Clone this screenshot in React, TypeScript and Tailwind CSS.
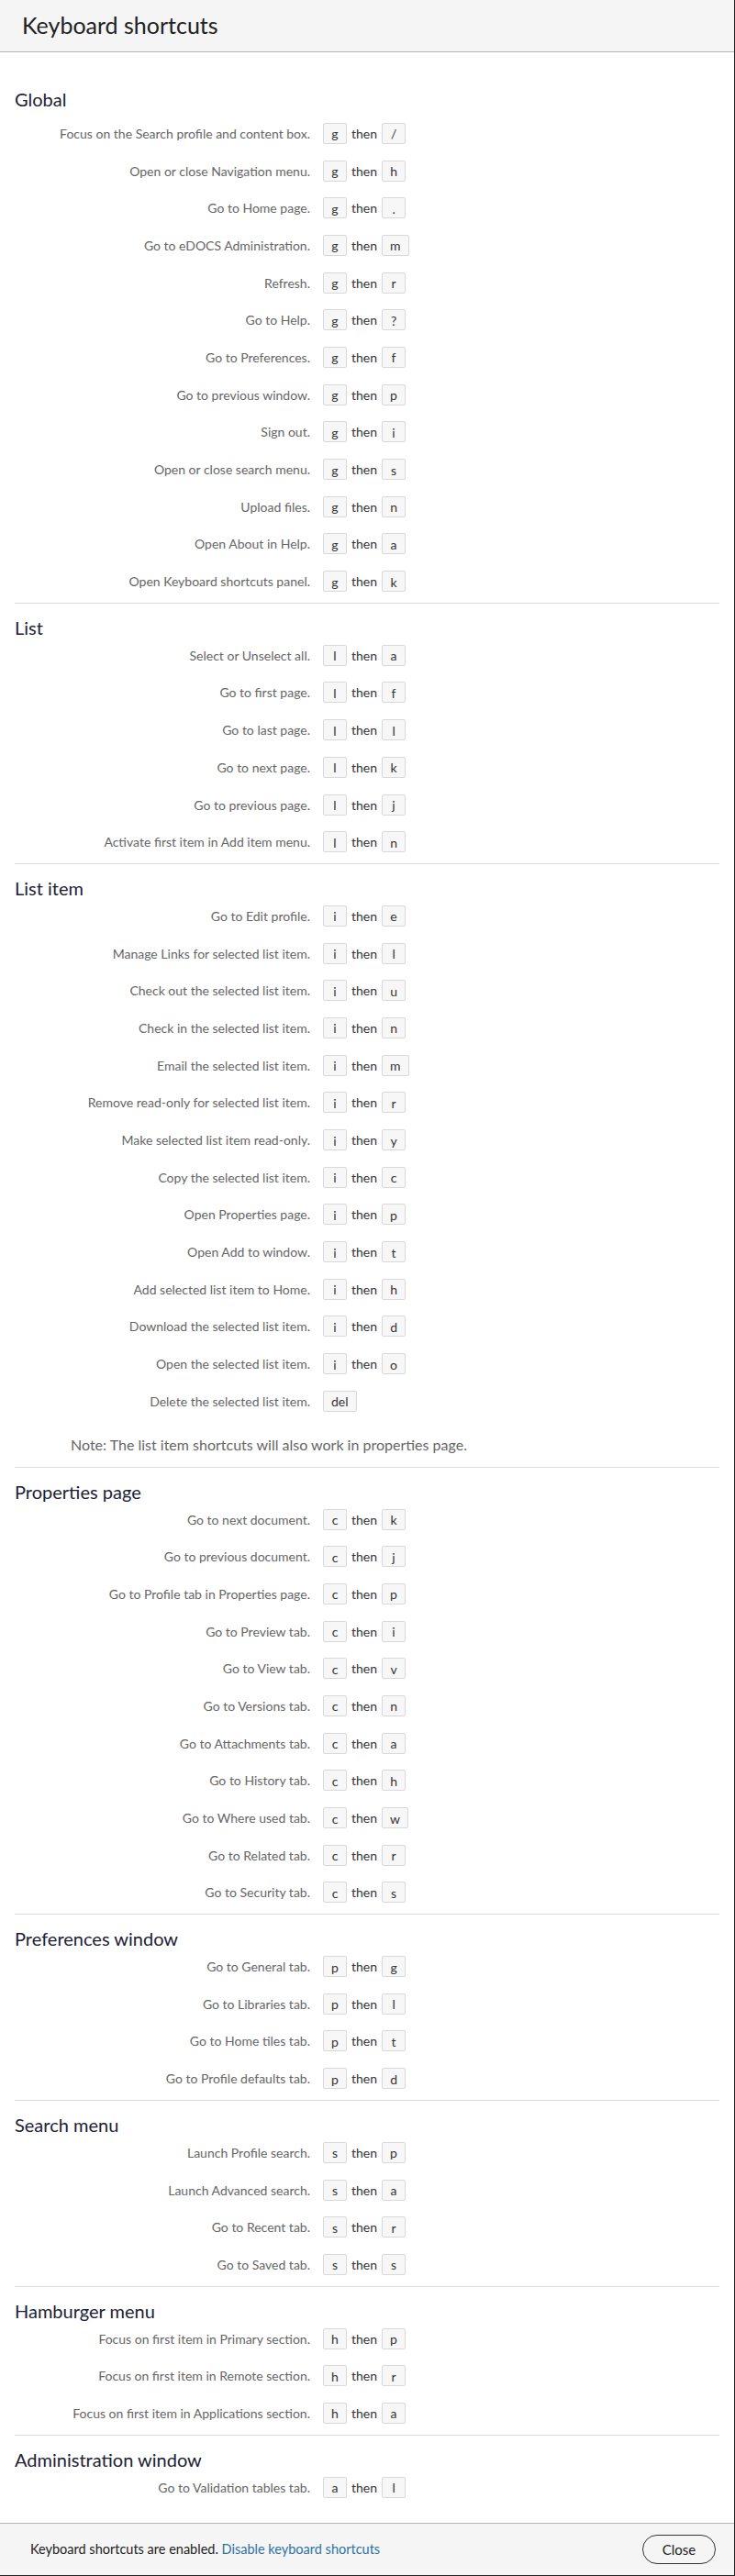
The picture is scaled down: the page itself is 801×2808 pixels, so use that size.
import React from "react";

type Shortcut = { label: string; keys: string[] };
type Section = { title: string; items: Shortcut[]; note?: string };

const sc = (label: string, ...keys: string[]): Shortcut => ({ label, keys });

const sections: Section[] = [
  {
    title: "Global",
    items: [
      sc("Focus on the Search profile and content box.", "g", "/"),
      sc("Open or close Navigation menu.", "g", "h"),
      sc("Go to Home page.", "g", "."),
      sc("Go to eDOCS Administration.", "g", "m"),
      sc("Refresh.", "g", "r"),
      sc("Go to Help.", "g", "?"),
      sc("Go to Preferences.", "g", "f"),
      sc("Go to previous window.", "g", "p"),
      sc("Sign out.", "g", "i"),
      sc("Open or close search menu.", "g", "s"),
      sc("Upload files.", "g", "n"),
      sc("Open About in Help.", "g", "a"),
      sc("Open Keyboard shortcuts panel.", "g", "k"),
    ],
  },
  {
    title: "List",
    items: [
      sc("Select or Unselect all.", "l", "a"),
      sc("Go to first page.", "l", "f"),
      sc("Go to last page.", "l", "l"),
      sc("Go to next page.", "l", "k"),
      sc("Go to previous page.", "l", "j"),
      sc("Activate first item in Add item menu.", "l", "n"),
    ],
  },
  {
    title: "List item",
    items: [
      sc("Go to Edit profile.", "i", "e"),
      sc("Manage Links for selected list item.", "i", "l"),
      sc("Check out the selected list item.", "i", "u"),
      sc("Check in the selected list item.", "i", "n"),
      sc("Email the selected list item.", "i", "m"),
      sc("Remove read-only for selected list item.", "i", "r"),
      sc("Make selected list item read-only.", "i", "y"),
      sc("Copy the selected list item.", "i", "c"),
      sc("Open Properties page.", "i", "p"),
      sc("Open Add to window.", "i", "t"),
      sc("Add selected list item to Home.", "i", "h"),
      sc("Download the selected list item.", "i", "d"),
      sc("Open the selected list item.", "i", "o"),
      sc("Delete the selected list item.", "del"),
    ],
    note: "Note: The list item shortcuts will also work in properties page.",
  },
  {
    title: "Properties page",
    items: [
      sc("Go to next document.", "c", "k"),
      sc("Go to previous document.", "c", "j"),
      sc("Go to Profile tab in Properties page.", "c", "p"),
      sc("Go to Preview tab.", "c", "i"),
      sc("Go to View tab.", "c", "v"),
      sc("Go to Versions tab.", "c", "n"),
      sc("Go to Attachments tab.", "c", "a"),
      sc("Go to History tab.", "c", "h"),
      sc("Go to Where used tab.", "c", "w"),
      sc("Go to Related tab.", "c", "r"),
      sc("Go to Security tab.", "c", "s"),
    ],
  },
  {
    title: "Preferences window",
    items: [
      sc("Go to General tab.", "p", "g"),
      sc("Go to Libraries tab.", "p", "l"),
      sc("Go to Home tiles tab.", "p", "t"),
      sc("Go to Profile defaults tab.", "p", "d"),
    ],
  },
  {
    title: "Search menu",
    items: [
      sc("Launch Profile search.", "s", "p"),
      sc("Launch Advanced search.", "s", "a"),
      sc("Go to Recent tab.", "s", "r"),
      sc("Go to Saved tab.", "s", "s"),
    ],
  },
  {
    title: "Hamburger menu",
    items: [
      sc("Focus on first item in Primary section.", "h", "p"),
      sc("Focus on first item in Remote section.", "h", "r"),
      sc("Focus on first item in Applications section.", "h", "a"),
    ],
  },
  {
    title: "Administration window",
    items: [sc("Go to Validation tables tab.", "a", "l")],
  },
];

function Key({ k }: { k: string }) {
  return (
    <span className="flex h-[23px] min-w-[26px] items-center justify-center rounded-[2px] border border-[#d9d9d9] bg-[#f7f7f7] px-[8px] pt-[2px] text-[14px] leading-none text-[#333]">
      {k}
    </span>
  );
}

function Row({ item }: { item: Shortcut }) {
  return (
    <div className="flex h-[40.7px] items-center">
      <div className="w-[336px] pr-[14px] text-right text-[14px] text-[#666]">{item.label}</div>
      <div className="flex items-center gap-[5px]">
        <Key k={item.keys[0]} />
        {item.keys[1] && (
          <>
            <span className="text-[14px] text-[#333]">then</span>
            <Key k={item.keys[1]} />
          </>
        )}
      </div>
    </div>
  );
}

export default function App() {
  return (
    <div
      className="flex h-[2808px] w-[801px] flex-col border-r border-b border-[#222] bg-white"
      style={{ fontFamily: "Lato, 'Liberation Sans', sans-serif" }}
    >
      <header className="flex h-[57px] shrink-0 items-center border-b border-[#b3b3b3] bg-[#f5f5f5] px-[24px]">
        <h1 className="text-[25px] text-[#222]">Keyboard shortcuts</h1>
      </header>

      <main className="flex-1 pt-[25px]">
        {sections.map((s, i) => (
          <section
            key={s.title}
            className={`mx-[16px] pt-[16px] ${i < sections.length - 1 ? "border-b border-[#dcdcdc]" : ""} ${
              s.note ? "pb-[12px]" : "pb-[3px]"
            }`}
          >
            <h2 className="text-[20px] leading-[20px] text-[#1c2235]">{s.title}</h2>
            <div className={i === 0 ? "mt-[7px]" : ""}>
              {s.items.map((it) => (
                <Row key={it.label} item={it} />
              ))}
            </div>
            {s.note && (
              <p className="mt-[15px] pl-[61px] text-[16px] leading-[24px] text-[#666]">{s.note}</p>
            )}
          </section>
        ))}
      </main>

      <footer className="flex h-[57px] shrink-0 items-center justify-between border-t border-[#b3b3b3] bg-[#f5f5f5] pl-[33px] pr-[20px]">
        <p className="text-[14.5px] text-[#222]">
          Keyboard shortcuts are enabled.{" "}
          <a href="#" className="text-[#2d73a3]">
            Disable keyboard shortcuts
          </a>
        </p>
        <button className="h-[32px] w-[80px] rounded-full border border-[#333] text-[15px] text-[#222]">
          Close
        </button>
      </footer>
    </div>
  );
}
